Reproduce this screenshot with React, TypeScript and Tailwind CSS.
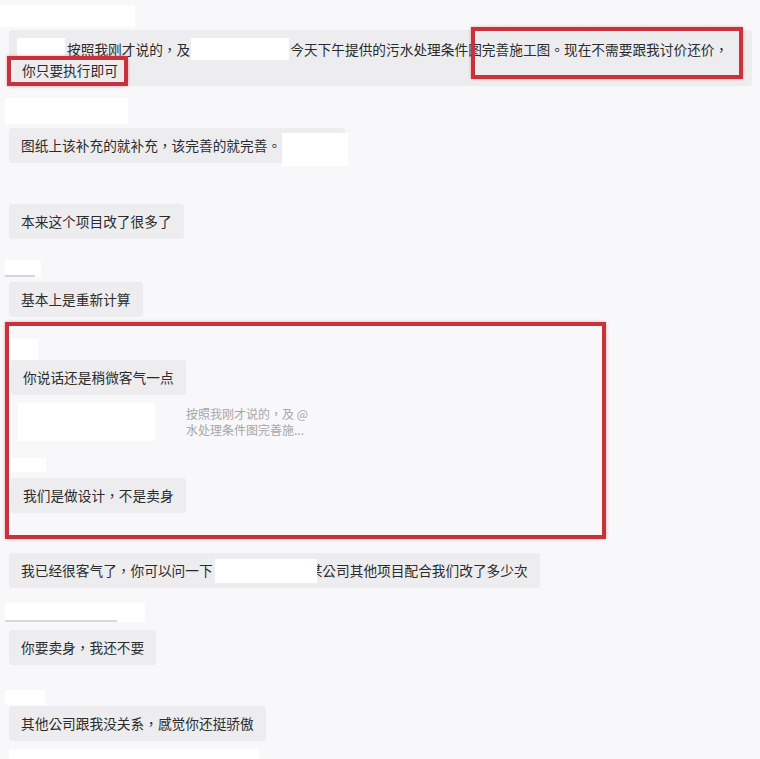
import type { ReactNode } from "react"

type BubbleProps = {
  children: ReactNode
  className?: string
}

function Bubble({ children, className = "" }: BubbleProps) {
  return (
    <div className={`relative w-fit rounded-[3px] bg-[#ededef] px-[12px] py-[8px] leading-[19px] ${className}`}>
      {children}
    </div>
  )
}

// white patch used to hide names
function Blank({ className = "" }: { className?: string }) {
  return <div className={`bg-white ${className}`} />
}

function Mark({ className = "" }: { className?: string }) {
  return (
    <div
      className={`pointer-events-none absolute border-[4px] border-[#c7323b] shadow-[0_0_3px_rgba(214,60,70,0.45)] ${className}`}
    />
  )
}

export default function App() {
  return (
    <div
      className="relative h-[759px] w-[760px] overflow-hidden bg-[#f8f8fa] pt-[5px] text-[13.7px] text-[#2b2b2b]"
      style={{ fontFamily: '"Noto Sans CJK TC", "Noto Sans CJK SC", sans-serif' }}
    >
      <Blank className="h-[22px] w-[135px]" />

      <div className="relative ml-[9px] mt-[3px] w-[743px] rounded-[3px] bg-[#ededef] pb-[5px] pl-[13px] pt-[8px] leading-[21px]">
        <div className="flex items-center">
          <span className="-ml-[5px] mr-[2px] inline-block h-[22px] w-[48px] bg-white" />
          <span>按照我刚才说的，及</span>
          <span className="mx-[1px] inline-block h-[22px] w-[98px] bg-white" />
          <span>今天下午提供的污水处理条件图完善施工图。现在不需要跟我讨价还价，</span>
        </div>
        <div>你只要执行即可</div>
      </div>

      <Blank className="ml-[5px] mt-[12px] h-[26px] w-[123px]" />

      <Bubble className="ml-[9px] mt-[4px] pr-[64px]">
        图纸上该补充的就补充，该完善的就完善。
        <Blank className="absolute left-[273px] top-[5px] h-[33px] w-[66px]" />
      </Bubble>

      <Bubble className="ml-[9px] mt-[41px]">本来这个项目改了很多了</Bubble>

      <div className="ml-[5px] mt-[21px] flex h-[17px] w-[36px] items-end bg-white">
        <div className="h-[2px] w-[30px] bg-[#d6d6da]" />
      </div>

      <Bubble className="ml-[9px] mt-[5px]">基本上是重新计算</Bubble>

      <div className="ml-[5px] mt-[5px] h-[217px] w-[601px] border-[4px] border-[#c7323b] shadow-[0_0_3px_rgba(214,60,70,0.45)]">
        <Blank className="ml-[1px] mt-[13px] h-[21px] w-[28px]" />
        <Bubble className="ml-[2px]">你说话还是稍微客气一点</Bubble>

        <div className="mt-[8px] flex">
          <Blank className="ml-[9px] h-[38px] w-[137px]" />
          <div className="ml-[31px] mt-[3px] text-[12px] leading-[16px] text-[#a6a6a8]">
            <div>按照我刚才说的，及 @</div>
            <div>水处理条件图完善施...</div>
          </div>
        </div>

        <Blank className="ml-[1px] mt-[17px] h-[14px] w-[36px]" />
        <Bubble className="ml-[2px] mt-[6px]">我们是做设计，不是卖身</Bubble>
      </div>

      <Bubble className="ml-[9px] mt-[14px]">
        <span className="flex items-center">
          <span>我已经很客气了，你可以问一下</span>
          <span className="relative z-10 -my-[3px] ml-[2px] inline-block h-[24px] w-[102px] bg-white" />
          <span className="-ml-[8px]">某公司其他项目配合我们改了多少次</span>
        </span>
      </Bubble>

      <div className="ml-[5px] mt-[15px] flex h-[19px] w-[140px] items-end bg-white">
        <div className="h-[2px] w-[112px] bg-[#d9d9dc]" />
      </div>

      <Bubble className="ml-[9px] mt-[8px] py-[8.5px]">你要卖身，我还不要</Bubble>

      <Blank className="ml-[5px] mt-[25px] h-[15px] w-[40px]" />

      <Bubble className="ml-[9px] mt-[1px]">其他公司跟我没关系，感觉你还挺骄傲</Bubble>

      <Blank className="ml-[9px] mt-[8px] h-[12px] w-[250px]" />

      <Mark className="left-[7px] top-[56px] h-[30px] w-[121px]" />
      <Mark className="left-[471px] top-[27px] h-[52px] w-[272px]" />
    </div>
  )
}
